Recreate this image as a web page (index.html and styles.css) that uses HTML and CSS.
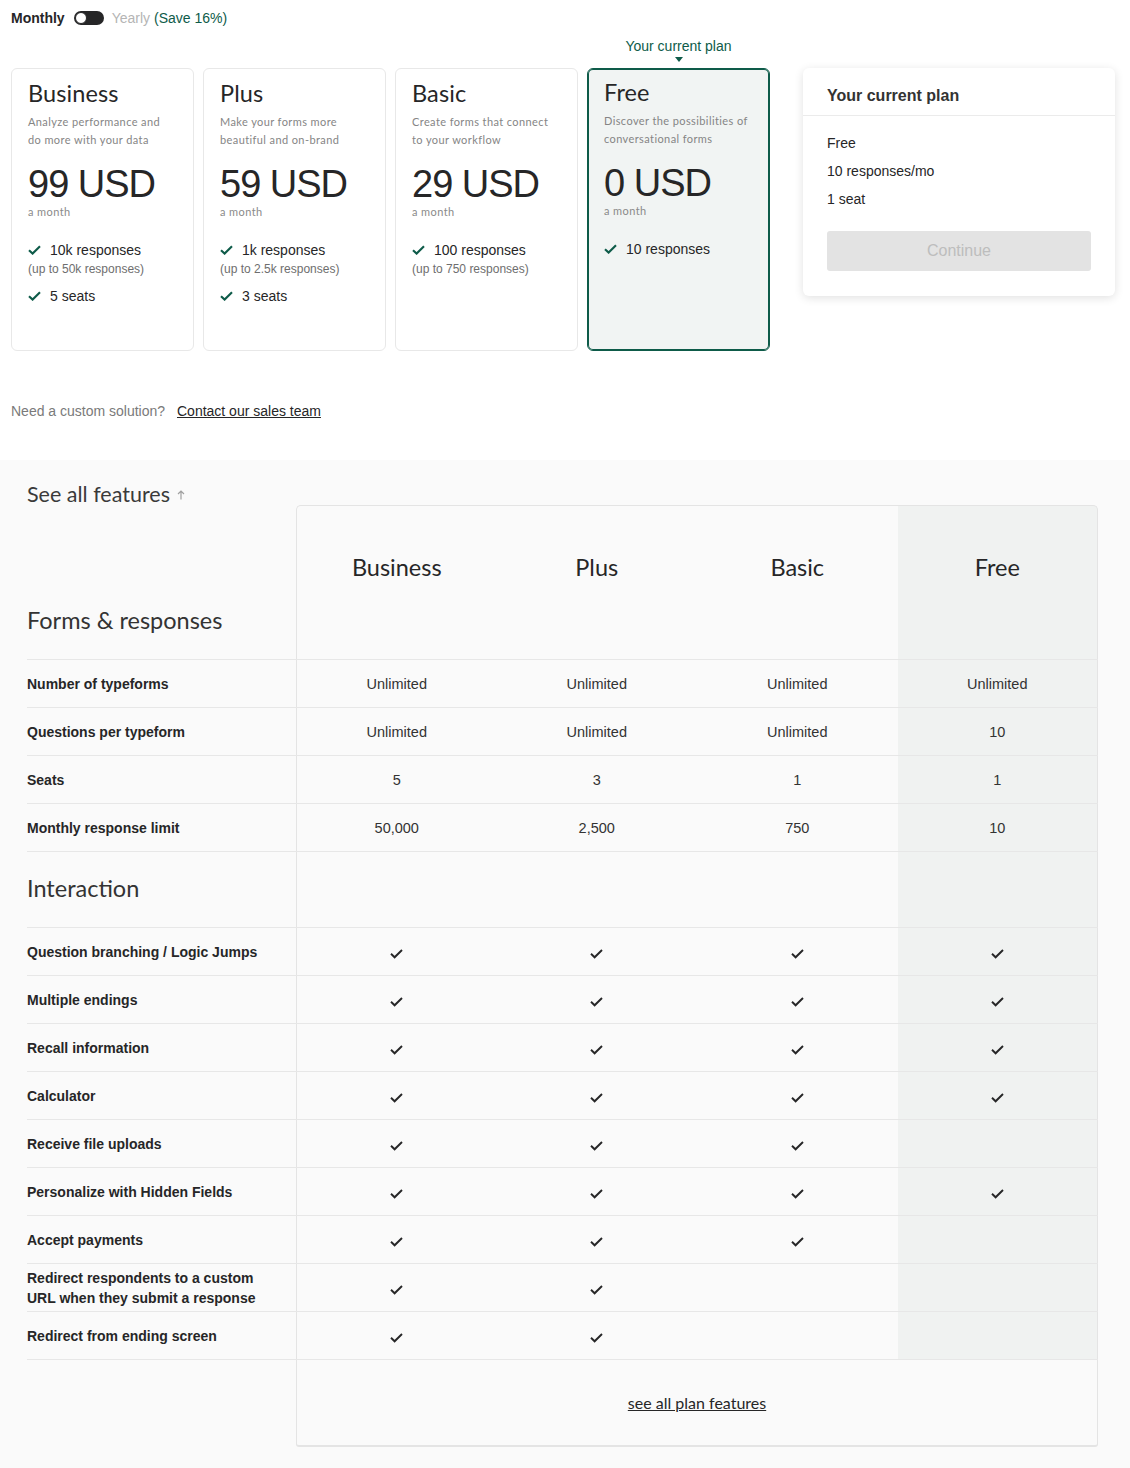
FILE: index.html
```html
<!DOCTYPE html>
<html lang="en">
<head>
  <meta charset="UTF-8" />
  <meta name="viewport" content="width=device-width, initial-scale=1.0"/>
  <title>Plans</title>
  <link rel="stylesheet" href="styles.css">
</head>
<body>
  <div class="page">
    <div class="billing">
      <span class="billing-on">Monthly</span>
      <span class="toggle"></span>
      <span class="billing-off">Yearly</span>
      <span class="billing-save">(Save 16%)</span>
    </div>

    <div class="top">
      <div class="plans">
        <div class="plan">
          <h3 class="plan-name">Business</h3>
          <p class="plan-desc">Analyze performance and do more with your data</p>
          <div class="plan-price">99 USD</div>
          <div class="plan-period">a month</div>
          <ul class="plan-perks">
            <li><svg class="tick" viewBox="0 0 13 10"><path d="M1 5.2l3.6 3.4L12 1.2"/></svg>10k responses</li>
            <li class="perk-note">(up to 50k responses)</li>
            <li class="perk-gap"><svg class="tick" viewBox="0 0 13 10"><path d="M1 5.2l3.6 3.4L12 1.2"/></svg>5 seats</li>
          </ul>
        </div>
        <div class="plan">
          <h3 class="plan-name">Plus</h3>
          <p class="plan-desc">Make your forms more beautiful and on-brand</p>
          <div class="plan-price">59 USD</div>
          <div class="plan-period">a month</div>
          <ul class="plan-perks">
            <li><svg class="tick" viewBox="0 0 13 10"><path d="M1 5.2l3.6 3.4L12 1.2"/></svg>1k responses</li>
            <li class="perk-note">(up to 2.5k responses)</li>
            <li class="perk-gap"><svg class="tick" viewBox="0 0 13 10"><path d="M1 5.2l3.6 3.4L12 1.2"/></svg>3 seats</li>
          </ul>
        </div>
        <div class="plan">
          <h3 class="plan-name">Basic</h3>
          <p class="plan-desc">Create forms that connect to your workflow</p>
          <div class="plan-price">29 USD</div>
          <div class="plan-period">a month</div>
          <ul class="plan-perks">
            <li><svg class="tick" viewBox="0 0 13 10"><path d="M1 5.2l3.6 3.4L12 1.2"/></svg>100 responses</li>
            <li class="perk-note">(up to 750 responses)</li>
          </ul>
        </div>
        <div class="plan plan-current">
          <div class="current-badge">Your current plan</div>
          <h3 class="plan-name">Free</h3>
          <p class="plan-desc">Discover the possibilities of conversational forms</p>
          <div class="plan-price">0 USD</div>
          <div class="plan-period">a month</div>
          <ul class="plan-perks">
            <li><svg class="tick" viewBox="0 0 13 10"><path d="M1 5.2l3.6 3.4L12 1.2"/></svg>10 responses</li>
          </ul>
        </div>
      </div>

      <aside class="summary">
        <div class="summary-head">Your current plan</div>
        <div class="summary-body">
          <div>Free</div>
          <div>10 responses/mo</div>
          <div>1 seat</div>
          <button class="summary-btn" disabled>Continue</button>
        </div>
      </aside>
    </div>

    <p class="custom">Need a custom solution? <a href="#">Contact our sales team</a></p>
  </div>

  <section class="features">
    <h2 class="features-title">See all features <svg class="arrow-up" viewBox="0 0 8 10"><path d="M4 9.5V1M1 4l3-3 3 3"/></svg></h2>

    <div class="ftable">
      <div class="frow frow-head">
        <div class="fl"><span class="group-title">Forms &amp; responses</span></div>
        <div class="fv">Business</div>
        <div class="fv">Plus</div>
        <div class="fv">Basic</div>
        <div class="fv">Free</div>
      </div>

      <div class="frow">
        <div class="fl">Number of typeforms</div>
        <div class="fv">Unlimited</div><div class="fv">Unlimited</div><div class="fv">Unlimited</div><div class="fv">Unlimited</div>
      </div>
      <div class="frow">
        <div class="fl">Questions per typeform</div>
        <div class="fv">Unlimited</div><div class="fv">Unlimited</div><div class="fv">Unlimited</div><div class="fv">10</div>
      </div>
      <div class="frow">
        <div class="fl">Seats</div>
        <div class="fv">5</div><div class="fv">3</div><div class="fv">1</div><div class="fv">1</div>
      </div>
      <div class="frow">
        <div class="fl">Monthly response limit</div>
        <div class="fv">50,000</div><div class="fv">2,500</div><div class="fv">750</div><div class="fv">10</div>
      </div>

      <div class="frow frow-group">
        <div class="fl"><span class="group-title">Interaction</span></div>
        <div class="fv"></div><div class="fv"></div><div class="fv"></div><div class="fv"></div>
      </div>

      <div class="frow">
        <div class="fl">Question branching / Logic Jumps</div>
        <div class="fv"><i class="yes"></i></div><div class="fv"><i class="yes"></i></div><div class="fv"><i class="yes"></i></div><div class="fv"><i class="yes"></i></div>
      </div>
      <div class="frow">
        <div class="fl">Multiple endings</div>
        <div class="fv"><i class="yes"></i></div><div class="fv"><i class="yes"></i></div><div class="fv"><i class="yes"></i></div><div class="fv"><i class="yes"></i></div>
      </div>
      <div class="frow">
        <div class="fl">Recall information</div>
        <div class="fv"><i class="yes"></i></div><div class="fv"><i class="yes"></i></div><div class="fv"><i class="yes"></i></div><div class="fv"><i class="yes"></i></div>
      </div>
      <div class="frow">
        <div class="fl">Calculator</div>
        <div class="fv"><i class="yes"></i></div><div class="fv"><i class="yes"></i></div><div class="fv"><i class="yes"></i></div><div class="fv"><i class="yes"></i></div>
      </div>
      <div class="frow">
        <div class="fl">Receive file uploads</div>
        <div class="fv"><i class="yes"></i></div><div class="fv"><i class="yes"></i></div><div class="fv"><i class="yes"></i></div><div class="fv"></div>
      </div>
      <div class="frow">
        <div class="fl">Personalize with Hidden Fields</div>
        <div class="fv"><i class="yes"></i></div><div class="fv"><i class="yes"></i></div><div class="fv"><i class="yes"></i></div><div class="fv"><i class="yes"></i></div>
      </div>
      <div class="frow">
        <div class="fl">Accept payments</div>
        <div class="fv"><i class="yes"></i></div><div class="fv"><i class="yes"></i></div><div class="fv"><i class="yes"></i></div><div class="fv"></div>
      </div>
      <div class="frow">
        <div class="fl">Redirect respondents to a custom URL when they submit a response</div>
        <div class="fv"><i class="yes"></i></div><div class="fv"><i class="yes"></i></div><div class="fv"></div><div class="fv"></div>
      </div>
      <div class="frow">
        <div class="fl">Redirect from ending screen</div>
        <div class="fv"><i class="yes"></i></div><div class="fv"><i class="yes"></i></div><div class="fv"></div><div class="fv"></div>
      </div>

      <div class="frow frow-foot">
        <div class="fl"></div>
        <div class="fv"><a href="#">see all plan features</a></div>
      </div>
    </div>
  </section>
</body>
</html>
```

FILE: styles.css
```css
body, html {
  margin: 0;
  padding: 0;
  font-family: "Liberation Sans", Arial, sans-serif;
  color: #262627;
  background: #fff;
}

.page {
  padding: 8px 0 0 11px;
}

/* monthly / yearly switch */
.billing {
  display: flex;
  align-items: center;
  font-size: 14px;
  line-height: 20px;
}

.billing-on {
  font-weight: bold;
}

.toggle {
  position: relative;
  width: 30px;
  height: 14px;
  margin: 0 8px 0 9px;
  border-radius: 7px;
  background: #262627;
}

.toggle::after {
  content: "";
  position: absolute;
  left: 1px;
  top: 1px;
  width: 12px;
  height: 12px;
  box-sizing: border-box;
  border-radius: 50%;
  background: #fff;
  border: 1px solid #262627;
}

.billing-off {
  color: #b5b5b5;
  margin-right: 4px;
}

.billing-save {
  color: #0e5b49;
}

/* plan cards */
.top {
  display: flex;
  align-items: flex-start;
  gap: 33px;
  margin-top: 40px;
}

.plans {
  display: flex;
  gap: 9px;
}

.plan {
  position: relative;
  width: 183px;
  height: 283px;
  box-sizing: border-box;
  padding: 9px 12px 0 16px;
  border: 1px solid #e8e8e8;
  border-radius: 6px;
  background: #fff;
}

.plan-current {
  padding-top: 8px;
  background: #f1f4f3;
  border-color: #0e5b49;
  box-shadow: inset 0 0 0 1px #0e5b49;
}

.current-badge {
  position: absolute;
  top: -33px;
  left: 0;
  right: 0;
  text-align: center;
  font-size: 14px;
  line-height: 20px;
  color: #0e5b49;
}

.current-badge::after {
  content: "";
  position: absolute;
  left: 50%;
  top: 21px;
  margin-left: -4px;
  border-left: 4px solid transparent;
  border-right: 4px solid transparent;
  border-top: 5px solid #0e5b49;
}

.plan-name {
  margin: 0;
  font-family: Lato, "Open Sans", sans-serif;
  font-weight: 400;
  font-size: 23.5px;
  line-height: 30px;
  letter-spacing: 0.1px;
}

.plan-desc {
  max-width: 146px;
  margin: 5px 0 0;
  font-family: Lato, "Open Sans", sans-serif;
  font-size: 11px;
  line-height: 18px;
  letter-spacing: 0.4px;
  color: #858585;
}

.plan-price {
  margin-top: 14px;
  font-size: 38px;
  line-height: 42px;
  letter-spacing: -1px;
}

.plan-period {
  font-family: Lato, "Open Sans", sans-serif;
  font-size: 11px;
  line-height: 14px;
  letter-spacing: 0.4px;
  color: #8a8a8a;
}

.plan-perks {
  list-style: none;
  margin: 21px 0 0;
  padding: 0;
}

.plan-perks li {
  display: flex;
  align-items: center;
  font-size: 14px;
  line-height: 20px;
}

.plan-perks .perk-note {
  font-size: 12px;
  line-height: 18px;
  color: #6e6e6e;
}

.plan-perks .perk-gap {
  margin-top: 8px;
}

.tick {
  width: 13px;
  height: 10px;
  margin-right: 9px;
  fill: none;
  stroke: #0e5b49;
  stroke-width: 2.1;
}

/* current plan summary */
.summary {
  width: 312px;
  border-radius: 6px;
  background: #fff;
  box-shadow: 0 2px 10px rgba(0, 0, 0, 0.12);
}

.summary-head {
  height: 48px;
  box-sizing: border-box;
  padding: 18px 24px 0;
  font-size: 16px;
  line-height: 20px;
  font-weight: bold;
  color: #333;
  border-bottom: 1px solid #ebebeb;
}

.summary-body {
  padding: 13px 24px 25px;
  font-size: 14px;
  line-height: 28px;
}

.summary-btn {
  display: block;
  width: 100%;
  height: 40px;
  margin-top: 18px;
  border: none;
  border-radius: 3px;
  background: #e3e3e3;
  color: #bdbdbd;
  font-family: inherit;
  font-size: 16px;
}

.custom {
  margin: 50px 0 0;
  padding-bottom: 39px;
  font-size: 14px;
  line-height: 20px;
  color: #7a7a7a;
}

.custom a {
  margin-left: 8px;
  color: #262627;
}

/* feature comparison */
.features {
  padding: 22px 32px 21px 27px;
  background: #fafafa;
}

.features-title {
  margin: 0 0 -1px;
  font-family: Lato, "Open Sans", sans-serif;
  font-weight: 400;
  font-size: 21.5px;
  line-height: 24px;
  color: #3a3a3a;
}

.arrow-up {
  width: 8px;
  height: 10px;
  margin-left: 2px;
  vertical-align: 2px;
  fill: none;
  stroke: #a0a0a0;
  stroke-width: 1.2;
}

.frow {
  display: grid;
  grid-template-columns: 269px repeat(4, 1fr);
  height: 48px;
  box-sizing: border-box;
  border-bottom: 1px solid #e7e7e7;
}

.fl {
  display: flex;
  align-items: center;
  padding-right: 28px;
  font-size: 14px;
  line-height: 20px;
  font-weight: bold;
}

.fv {
  display: flex;
  align-items: center;
  justify-content: center;
  font-size: 14.5px;
  color: #333;
}

.frow .fv:nth-child(2) {
  border-left: 1px solid #e4e4e4;
}

.frow .fv:last-child {
  border-right: 1px solid #e4e4e4;
  background: #f0f2f1;
}

.frow-head {
  height: 155px;
}

.frow-head .fl {
  align-items: flex-end;
  padding-bottom: 25px;
}

.frow-head .fv {
  align-items: flex-start;
  padding-top: 47px;
  border-top: 1px solid #e4e4e4;
  font-family: Lato, "Open Sans", sans-serif;
  font-size: 23.5px;
  line-height: 28px;
  color: #262627;
}

.frow-head .fv:nth-child(2) {
  border-top-left-radius: 5px;
}

.frow-head .fv:last-child {
  border-top-right-radius: 5px;
}

.group-title {
  font-family: Lato, "Open Sans", sans-serif;
  font-weight: 400;
  font-size: 23.5px;
  line-height: 28px;
  color: #333;
}

.frow-group {
  height: 76px;
}

.frow-group .fl {
  padding-bottom: 3px;
}

.yes {
  width: 13px;
  height: 10px;
  margin-top: 5px;
  background: no-repeat center / contain url("data:image/svg+xml,%3Csvg xmlns='http://www.w3.org/2000/svg' viewBox='0 0 13 10'%3E%3Cpath d='M1 4.8l3.6 3.5L12 1' fill='none' stroke='%23262627' stroke-width='1.9'/%3E%3C/svg%3E");
}

.frow-foot {
  grid-template-columns: 269px 1fr;
  height: 87px;
  border-bottom: none;
}

.frow-foot .fv:last-child {
  background: none;
  border-left: 1px solid #e4e4e4;
  border-right: 1px solid #e4e4e4;
  border-bottom: 2px solid #e4e4e4;
  border-radius: 0 0 3px 3px;
}

.frow-foot a {
  font-family: Lato, "Open Sans", sans-serif;
  font-size: 16px;
  color: #262627;
}
```
